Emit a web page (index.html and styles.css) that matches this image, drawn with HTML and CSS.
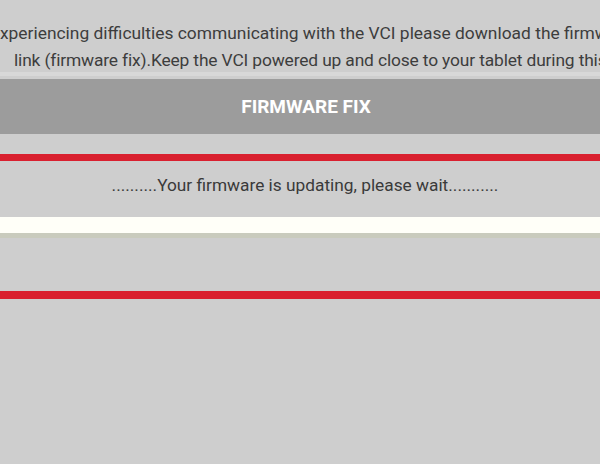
FILE: index.html
```html
<!DOCTYPE html>
<html lang="en">
<head>
    <meta charset="UTF-8">
    <meta name="viewport" content="width=device-width, initial-scale=1.0">
    <title>Firmware Fix</title>
    <link rel="stylesheet" href="styles.css">
</head>
<body>

<div class="screen">
    <!-- Help text, wider than the window -->
    <div class="notice">
        <p class="notice-line line-one">If you are experiencing difficulties communicating with the VCI please download the firmware from the</p>
        <p class="notice-line line-two">link (firmware fix).Keep the VCI powered up and close to your tablet during this process.</p>
    </div>
    <div class="notice-rule"></div>

    <button class="fix-btn" type="button">FIRMWARE FIX</button>

    <div class="red-bar"></div>

    <div class="status">..........Your firmware is updating, please wait...........</div>

    <div class="progress"></div>

    <div class="spacer"></div>

    <div class="red-bar red-bar-low"></div>
</div>

</body>
</html>
```

FILE: styles.css
```css
body {
    font-family: 'Roboto', 'Liberation Sans', sans-serif;
    background-color: #cecece;
    margin: 0;
    padding: 0;
    overflow: hidden;
}

.screen {
    width: 600px;
    height: 464px;
    overflow: hidden;
}

.notice {
    padding-top: 20px;
    height: 52px;
    color: #3d3d3d;
    font-size: 17.4px;
}

.notice-line {
    margin: 0;
    white-space: nowrap;
    line-height: 27px;
}

.line-one {
    margin-left: -85px;
}

.line-two {
    margin-left: 14px;
    letter-spacing: -0.15px;
}

.notice-rule {
    height: 4px;
    background-color: #d8d8d8;
    margin-bottom: 3px;
}

.fix-btn {
    display: block;
    width: 100%;
    height: 55px;
    border: none;
    background-color: #9c9c9c;
    color: #fff;
    font-family: inherit;
    font-size: 19px;
    font-weight: bold;
    padding: 0 0 0 12px;
}

.red-bar {
    height: 7px;
    background-color: #d9202f;
    margin-top: 20px;
}

.red-bar-low {
    height: 8px;
    margin-top: 0;
}

.status {
    text-align: center;
    color: #3a3a3a;
    font-size: 17.3px;
    line-height: 20px;
    padding: 14px 0 0 10px;
    height: 42px;
}

.progress {
    height: 16px;
    background-color: #fffff8;
    border-bottom: 5px solid #c9cbbd;
}

.spacer {
    height: 53px;
}
```
